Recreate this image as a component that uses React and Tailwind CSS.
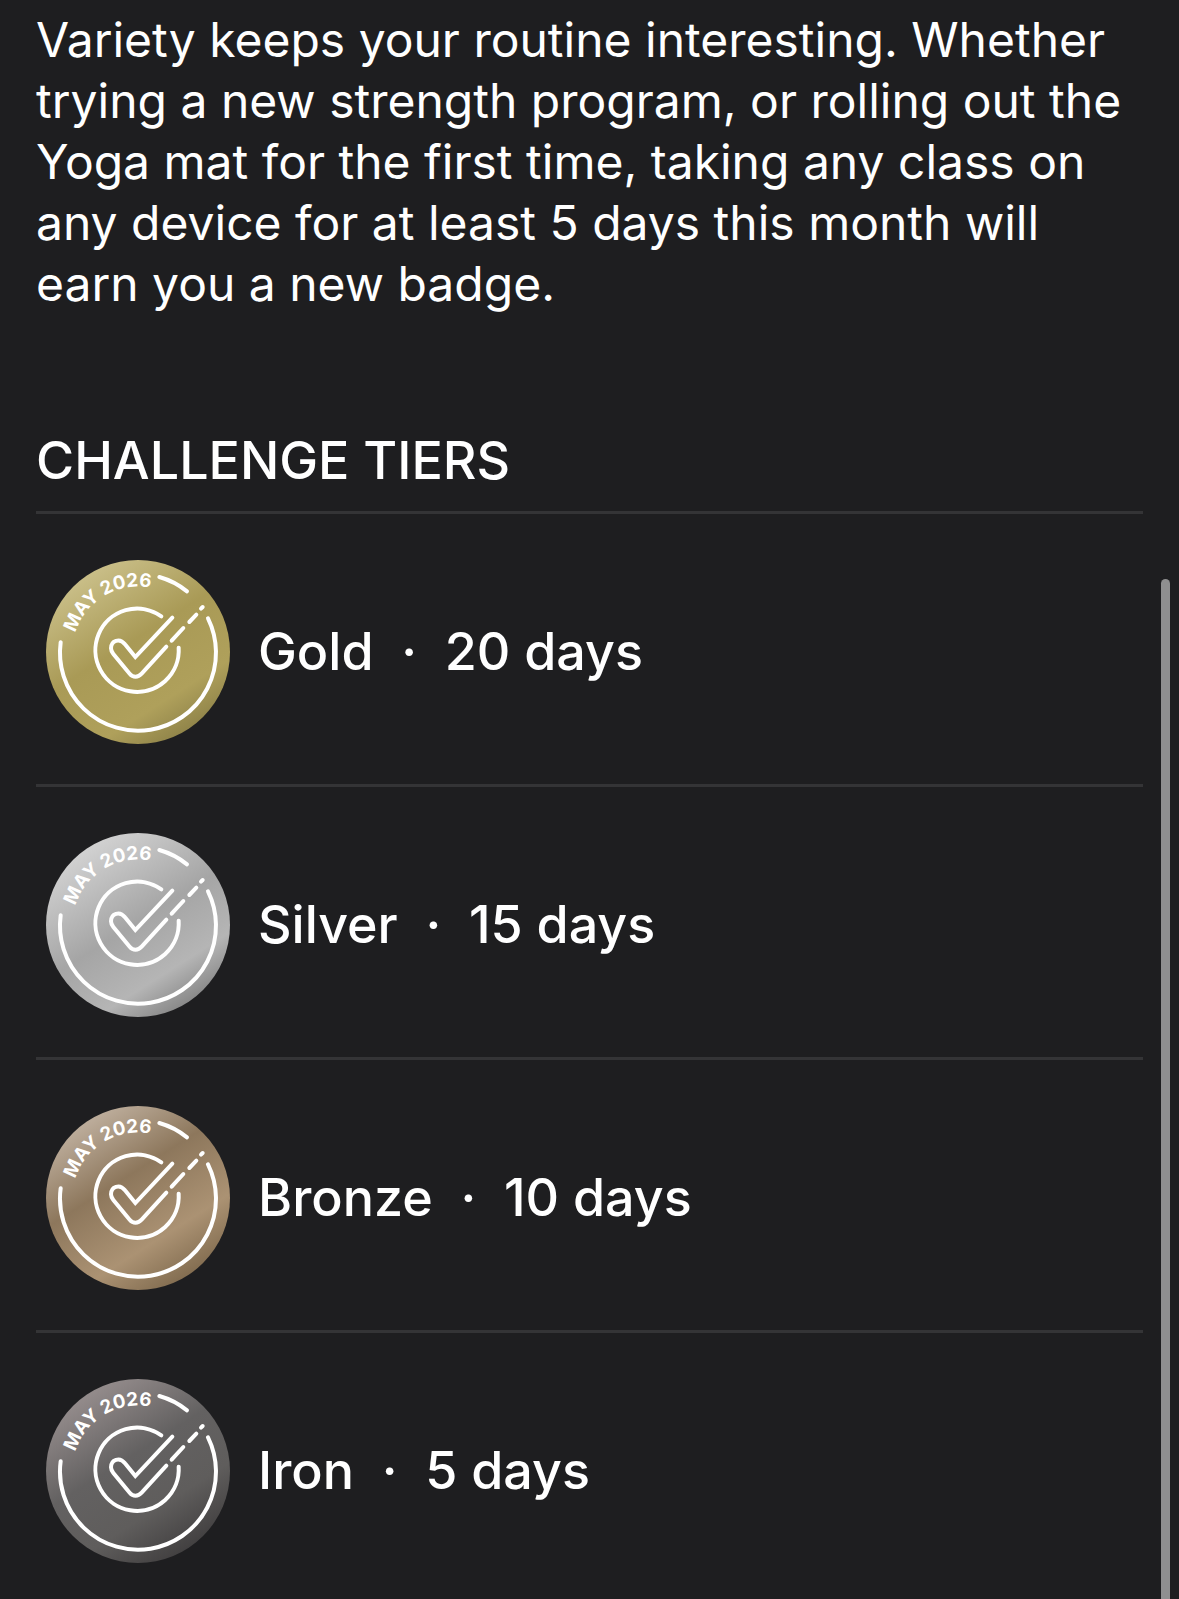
const tiers = [
  {
    name: "Gold",
    days: 20,
    stops: [
      ["0", "#c8bd86"],
      ["0.4", "#a99a56"],
      ["0.75", "#afa05b"],
      ["1", "#887d45"],
    ],
  },
  {
    name: "Silver",
    days: 15,
    stops: [
      ["0", "#d0d0d0"],
      ["0.45", "#a5a5a5"],
      ["0.75", "#b5b5b5"],
      ["1", "#7c7c7c"],
    ],
  },
  {
    name: "Bronze",
    days: 10,
    stops: [
      ["0", "#bbab99"],
      ["0.34", "#8d775c"],
      ["0.7", "#ab9273"],
      ["1", "#7a6549"],
    ],
  },
  {
    name: "Iron",
    days: 5,
    stops: [
      ["0", "#928a8a"],
      ["0.38", "#636161"],
      ["0.68", "#5f5d5c"],
      ["1", "#3c3a3b"],
    ],
  },
];

// round medal with the month written along its rim
const Badge = ({ id, stops }) => {
  return (
    <svg
      className="size-[184px] shrink-0"
      viewBox="30 30 552 552"
      fill="none"
      role="img"
      aria-label={`${id} badge`}
    >
      <defs>
        <linearGradient
          id={`fill-${id}`}
          gradientUnits="userSpaceOnUse"
          x1="160"
          y1="80"
          x2="470"
          y2="570"
        >
          {stops.map(([offset, color]) => (
            <stop key={offset} offset={offset} stopColor={color} />
          ))}
        </linearGradient>
        <path id={`rim-${id}`} d="M118 249 A197 197 0 0 1 480 214" />
      </defs>
      <circle cx="306" cy="306" r="276" fill={`url(#fill-${id})`} />
      <text
        className="font-['Inter',sans-serif] text-[56px] font-bold"
        fill="#fff"
      >
        <textPath href={`#rim-${id}`}>MAY 2026</textPath>
      </text>
      <g
        stroke="#fff"
        strokeWidth="12"
        strokeLinecap="round"
        strokeLinejoin="miter"
      >
        {/* outer ring */}
        <path d="M74 277 A234 234 0 1 0 516 205" />
        <path d="M370 81 A234 234 0 0 1 453 124" />
        {/* inner ring */}
        <path d="M376 199 A125 125 0 1 0 428 293" />
        {/* check mark */}
        <path d="M409 203 L298 321 L267 283 C251 262 225 272 225 295 C225 302 228 307 232 312 L281 371 C291 383 306 383 317 371 L391 290" />
        <path d="M407 272 L442 234 M460 216 L481 194 M495 176 L500 171" />
      </g>
    </svg>
  );
};

const TierRow = ({ tier }) => {
  return (
    <li className="flex items-center gap-7 border-t-3 border-[#343436] pt-[46px] pb-10 pl-[10px]">
      <Badge id={tier.name} stops={tier.stops} />
      <span className="whitespace-pre text-[52px] leading-16 font-medium">
        {`${tier.name}  ·  ${tier.days} days`}
      </span>
    </li>
  );
};

const App = () => {
  return (
    <main className="relative h-screen overflow-hidden bg-[#1e1e20] px-9 pt-[9px] font-['Inter',sans-serif] text-white">
      {/* description */}
      <p className="text-[48px] leading-[61px]">
        Variety keeps your routine interesting. Whether trying a new strength
        program, or rolling out the Yoga mat for the first time, taking any
        class on any device for at least 5 days this month will earn you a new
        badge.
      </p>

      {/* tiers */}
      <h2 className="mt-[115px] mb-[18px] text-[52px] leading-16 font-medium">
        CHALLENGE TIERS
      </h2>
      <ul>
        {tiers.map((tier) => (
          <TierRow key={tier.name} tier={tier} />
        ))}
      </ul>

      {/* scroll thumb */}
      <div className="absolute top-[579px] right-[9px] bottom-0 w-[9px] rounded-t-full bg-[#8f8f90]" />
    </main>
  );
};

export default App;
